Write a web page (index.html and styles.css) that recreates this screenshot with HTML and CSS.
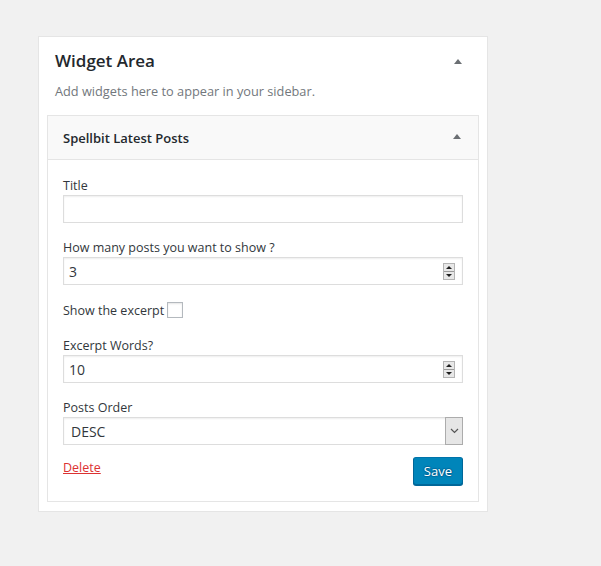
FILE: index.html
```html
<!DOCTYPE html>
<html lang="en">
<head>
<meta charset="utf-8">
<title>Widget Area</title>
<link rel="stylesheet" href="styles.css">
</head>
<body>
<div class="sidebar">
  <div class="sidebar-head">
    <h2 class="sidebar-title">Widget Area</h2>
    <span class="toggle"></span>
  </div>
  <p class="sidebar-desc">Add widgets here to appear in your sidebar.</p>

  <div class="widget">
    <div class="widget-head">
      <h3 class="widget-title">Spellbit Latest Posts</h3>
      <span class="toggle"></span>
    </div>
    <div class="widget-body">
      <div class="field">
        <label class="label">Title</label>
        <div class="box"><input class="text" type="text" value=""></div>
      </div>
      <div class="field">
        <label class="label">How many posts you want to show ?</label>
        <div class="box">
          <input class="text" type="text" value="3">
          <svg class="spin" width="12" height="17" viewBox="0 0 12 17"><rect x="0.5" y="0.5" width="11" height="16" fill="#e8e8e8" stroke="#b4b4b4"/><line x1="1" y1="8.5" x2="11" y2="8.5" stroke="#9a9a9a"/><path d="M3 6h6L6 3z" fill="#1e1e1e"/><path d="M3 11h6l-3 3z" fill="#1e1e1e"/></svg>
        </div>
      </div>
      <div class="check-row">
        <span>Show the excerpt</span><span class="checkbox"></span>
      </div>
      <div class="field">
        <label class="label">Excerpt Words?</label>
        <div class="box">
          <input class="text" type="text" value="10">
          <svg class="spin" width="12" height="17" viewBox="0 0 12 17"><rect x="0.5" y="0.5" width="11" height="16" fill="#e8e8e8" stroke="#b4b4b4"/><line x1="1" y1="8.5" x2="11" y2="8.5" stroke="#9a9a9a"/><path d="M3 6h6L6 3z" fill="#1e1e1e"/><path d="M3 11h6l-3 3z" fill="#1e1e1e"/></svg>
        </div>
      </div>
      <div class="field field-last">
        <label class="label">Posts Order</label>
        <div class="box select">
          <span class="select-value">DESC</span>
          <span class="select-btn"><svg width="9" height="6" viewBox="0 0 9 6"><path d="M1 1l3.5 3.5L8 1" fill="none" stroke="#555" stroke-width="1.2"/></svg></span>
        </div>
      </div>
      <div class="actions">
        <a class="delete" href="#">Delete</a>
        <button class="save" type="button">Save</button>
      </div>
    </div>
  </div>
</div>
</body>
</html>
```

FILE: styles.css
```css
html, body {
  margin: 0;
  padding: 0;
}
body {
  background: #f1f1f1;
  font-family: "Open Sans", "Noto Sans", sans-serif;
  color: #32373c;
  font-size: 13px;
  padding: 36px 0 0 38px;
}
.sidebar {
  box-sizing: border-box;
  width: 450px;
  background: #fff;
  border: 1px solid #e5e5e5;
  padding: 11px 8px 9px;
}
.sidebar-head {
  display: flex;
  justify-content: space-between;
  align-items: flex-start;
  padding: 0 17px 0 8px;
}
.sidebar-title {
  margin: 0;
  font-size: 17px;
  font-weight: 600;
  line-height: 26px;
  color: #23282d;
}
.toggle {
  width: 0;
  height: 0;
  border-left: 4px solid transparent;
  border-right: 4px solid transparent;
  border-bottom: 5px solid #6b6f73;
  margin-top: 11px;
}
.sidebar-desc {
  margin: 8px 0 15px 8px;
  line-height: 18px;
  color: #72777c;
  font-size: 12.75px;
}
.widget {
  border: 1px solid #e5e5e5;
  background: #fff;
}
.widget-head {
  display: flex;
  justify-content: space-between;
  align-items: center;
  height: 43px;
  background: #f9f9f9;
  border-bottom: 1px solid #e5e5e5;
  padding: 0 17px 0 15px;
}
.widget-head .toggle {
  margin-top: -2px;
}
.widget-title {
  margin: 0;
  font-size: 13px;
  font-weight: 600;
  line-height: 43px;
  padding-top: 2px;
  color: #23282d;
}
.widget-body {
  padding: 17px 15px 16px;
  display: flex;
  flex-direction: column;
}
.field {
  display: flex;
  flex-direction: column;
  margin-bottom: 16px;
}
.label {
  line-height: 18px;
  font-size: 12.5px;
  color: #32373c;
}
.box {
  box-sizing: border-box;
  height: 28px;
  border: 1px solid #ddd;
  box-shadow: inset 0 1px 2px rgba(0, 0, 0, 0.07);
  background: #fff;
  display: flex;
  align-items: center;
  padding: 0 7px 0 0;
}
.text {
  flex: 1;
  min-width: 0;
  border: 0;
  outline: 0;
  background: transparent;
  font: 14px "Open Sans", "Noto Sans", sans-serif;
  color: #32373c;
  padding: 0 0 0 5px;
  height: 24px;
}
.spin {
  display: block;
  flex: none;
}
.check-row {
  margin: 1px 0 17px;
  line-height: 18px;
  font-size: 12.5px;
  display: flex;
  align-items: flex-start;
  gap: 3px;
}
.checkbox {
  box-sizing: border-box;
  width: 16px;
  height: 16px;
  border: 1px solid #b4b9be;
  background: #fff;
  box-shadow: inset 0 1px 2px rgba(0, 0, 0, 0.1);
}
.select {
  padding: 0;
}
.select-value {
  flex: 1;
  padding-left: 7px;
  font-size: 14px;
  color: #32373c;
}
.select-btn {
  box-sizing: border-box;
  width: 18px;
  height: 28px;
  margin: -1px -1px -1px 0;
  background: #e6e6e6;
  border: 1px solid #acacac;
  display: flex;
  align-items: center;
  justify-content: center;
}
.select-btn svg {
  display: block;
}
.field-last {
  margin-bottom: 12px;
}
.actions {
  display: flex;
  justify-content: space-between;
  align-items: flex-start;
}
.delete {
  color: #dc3232;
  text-decoration: underline;
  line-height: 18px;
  font-size: 12.5px;
  margin-top: 2px;
}
.save {
  box-sizing: border-box;
  height: 28px;
  padding: 0 10px 1px;
  font: 13px "Open Sans", "Noto Sans", sans-serif;
  color: #fff;
  background: #0085ba;
  border: 1px solid;
  border-color: #0073aa #006799 #006799;
  border-radius: 3px;
  box-shadow: 0 1px 0 #006799;
  text-shadow: 0 -1px 1px #006799, 1px 0 1px #006799, 0 1px 1px #006799, -1px 0 1px #006799;
}
```
